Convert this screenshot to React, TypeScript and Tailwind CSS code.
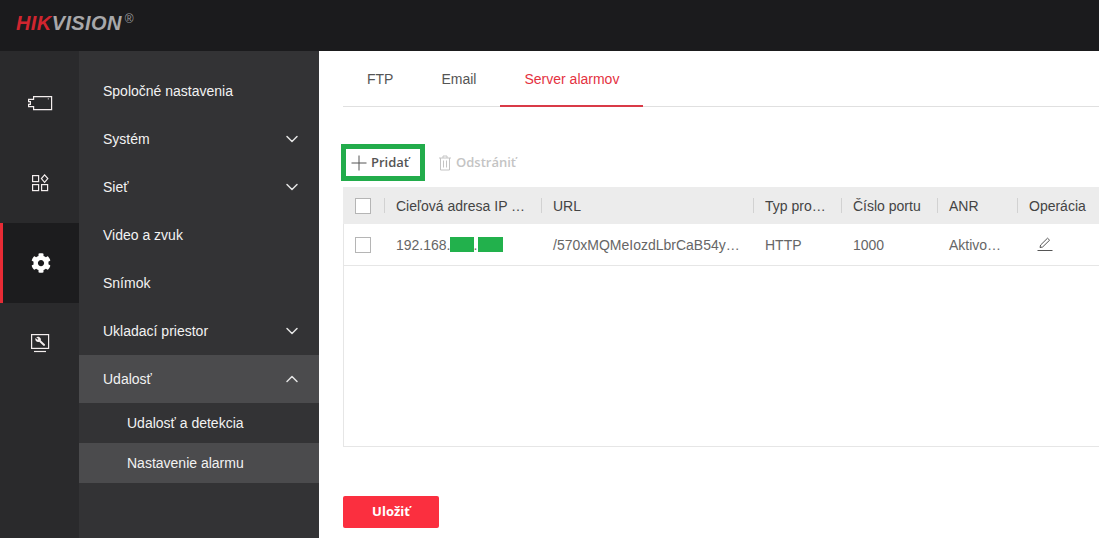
import { ChevronDown, ChevronUp } from "lucide-react";
import { FaCog } from "react-icons/fa";

const menu = [
  { name: "Spoločné nastavenia" },
  { name: "Systém", arrow: true },
  { name: "Sieť", arrow: true },
  { name: "Video a zvuk" },
  { name: "Snímok" },
  { name: "Ukladací priestor", arrow: true },
];

const CameraIcon = () => (
  <svg width="26" height="16" viewBox="0 0 26 16" fill="none" stroke="#f4eeee" strokeWidth="1.2">
    <path d="M6.6 1.6H24.6V14.6H6.6V11.6H1.6V9.4H3.4V6.6H1.6V4.4H6.6Z" />
    <rect x="20.8" y="3.4" width="1" height="1" fill="#f4eeee" stroke="none" />
  </svg>
);

const AppsIcon = () => (
  <svg width="20" height="20" viewBox="0 0 20 20" fill="none" stroke="#f4eeee" strokeWidth="1.2">
    <rect x="2.6" y="2.6" width="6" height="6" />
    <rect x="2.6" y="11.6" width="6" height="6" />
    <rect x="11.6" y="11.6" width="6" height="6" />
    <path d="M14.6 1.9L17.8 5.6L14.6 9.3L11.4 5.6Z" />
  </svg>
);

const MaintenanceIcon = () => (
  <svg width="20" height="20" viewBox="0 0 20 20" fill="none">
    <rect x="1.6" y="1.6" width="17" height="13.8" stroke="#f4eeee" strokeWidth="1.2" />
    <path d="M4 18.5H16" stroke="#f4eeee" strokeWidth="1.2" />
    <path
      d="M6.2 4.2C7.6 3.2 9.8 3.6 10.6 5.2C11 6 11 6.8 10.8 7.4L14.8 11.2C15.4 11.8 14.8 13 14 13C13.6 13 13.4 12.8 13.2 12.6L9.2 8.8C8.2 9.2 6.8 9 6 8C5.2 7 5.2 5.8 5.6 5L7.4 6.8L8.4 6L6.2 4.2Z"
      fill="#f4eeee"
    />
  </svg>
);

const PlusIcon = () => (
  <svg width="16" height="16" viewBox="0 0 16 16" stroke="#555" strokeWidth="1">
    <path d="M8 0.5V15.5M0.5 8H15.5" />
  </svg>
);

const TrashIcon = () => (
  <svg width="14" height="16" viewBox="0 0 14 16" fill="none" stroke="#c4c4c4" strokeWidth="1">
    <path d="M1 3H13M5 3V1H9V3M2.5 3V15H11.5V3M5.5 5.5V12.5M8.5 5.5V12.5" />
  </svg>
);

const PencilIcon = () => (
  <svg width="16" height="15" viewBox="0 0 16 15" fill="none" stroke="#555" strokeWidth="1">
    <path d="M3 10.5L3.6 8L10.5 1.2L12.6 3.2L5.6 10Z" />
    <path d="M0.5 13.5H15.5" />
  </svg>
);

const Checkbox = () => <span className="block w-4 h-4 border border-[#b5b5b5] bg-white" />;

const RailItem = ({ active, children }: { active?: boolean; children: React.ReactNode }) => (
  <div
    className={
      active
        ? "h-20 flex items-center justify-center bg-[#1c1c1e] border-l-[3px] border-[#e72b35]"
        : "h-20 flex items-center justify-center"
    }
  >
    {children}
  </div>
);

const HeadCell = ({ children, className }: { children: React.ReactNode; className: string }) => (
  <div className={`${className} relative flex items-center pl-3 pt-[2px] whitespace-nowrap overflow-hidden`}>
    <span className="absolute left-0 top-[11px] h-[15px] w-px bg-[#d2d2d2]" />
    {children}
  </div>
);

export default function App() {
  return (
    <div className="w-[1099px] h-[538px] overflow-hidden flex flex-col bg-white text-[14px] font-['Liberation_Sans',Arial,sans-serif]">
      <header className="h-[51px] shrink-0 bg-[#1b1b1d] flex items-center pl-4">
        <div className="flex items-start italic font-bold text-[20px] leading-none tracking-[0.4px] -mt-[5px]">
          <span className="text-[#d0252f]">HIK</span>
          <span className="text-[#a8a8aa]">VISION</span>
          <span className="not-italic font-normal text-[12px] text-[#9a9a9c] ml-[3px]">®</span>
        </div>
      </header>

      <div className="flex flex-1 min-h-0">
        <aside className="w-[79px] shrink-0 bg-[#2a2a2c] pt-3">
          <RailItem>
            <CameraIcon />
          </RailItem>
          <RailItem>
            <AppsIcon />
          </RailItem>
          <RailItem active>
            <FaCog className="text-white text-[20px]" />
          </RailItem>
          <RailItem>
            <MaintenanceIcon />
          </RailItem>
        </aside>

        <nav className="w-[240px] shrink-0 bg-[#333335] pt-4 text-[#f2f2f2]">
          {menu.map((item) => (
            <div key={item.name} className="h-12 flex items-center justify-between pl-6 pr-[17px]">
              <span>{item.name}</span>
              {item.arrow && <ChevronDown size={20} strokeWidth={1.8} className="text-[#e4e4e4]" />}
            </div>
          ))}
          <div className="h-12 flex items-center justify-between pl-6 pr-[17px] bg-[#4b4b4d]">
            <span>Udalosť</span>
            <ChevronUp size={20} strokeWidth={1.8} className="text-[#e4e4e4]" />
          </div>
          <div className="h-10 flex items-center pl-12">Udalosť a detekcia</div>
          <div className="h-10 flex items-center pl-12 bg-[#4b4b4d]">Nastavenie alarmu</div>
        </nav>

        <main className="flex-1 min-w-0 pl-6 text-[#555]">
          <div className="flex h-[56px] border-b border-[#e0e0e0]">
            <div className="px-6 pt-5 leading-4">FTP</div>
            <div className="px-6 pt-5 leading-4">Email</div>
            <div className="px-6 pt-5 leading-4 text-[#e4323f] h-[56px] border-b-2 border-[#d93a47]">Server alarmov</div>
          </div>

          <div className="flex items-center h-[37px] mt-[37px] -ml-[2px]">
            <div className="w-[84px] h-[37px] flex items-center gap-[4px] pl-[5px] border-[5px] border-[#22ac4b] text-[#555] font-['Open_Sans',sans-serif] font-semibold text-[13px]">
              <PlusIcon />
              <span>Pridať</span>
            </div>
            <div className="flex items-center gap-[4px] ml-[13px] text-[#c4c4c4] font-['Open_Sans',sans-serif] font-semibold text-[13px]">
              <TrashIcon />
              <span>Odstrániť</span>
            </div>
          </div>

          <div className="mt-[6px] h-[260px] w-[800px] border-l border-b border-[#e6e6e6]">
            <div className="h-[37px] flex bg-[#ececec] text-[#444] -ml-px">
              <div className="w-[41px] flex items-center pl-3">
                <Checkbox />
              </div>
              <HeadCell className="w-[157px]">Cieľová adresa IP …</HeadCell>
              <HeadCell className="w-[212px]">URL</HeadCell>
              <HeadCell className="w-[88px]">Typ pro…</HeadCell>
              <HeadCell className="w-[96px]">Číslo portu</HeadCell>
              <HeadCell className="w-[80px]">ANR</HeadCell>
              <HeadCell className="w-[100px]">Operácia</HeadCell>
            </div>
            <div className="h-[42px] flex items-center border-b border-[#e6e6e6] text-[#666]">
              <div className="w-[40px] pl-[11px]">
                <Checkbox />
              </div>
              <div className="w-[157px] pl-3 pt-[2px] flex items-center whitespace-nowrap">
                192.168.
                <span className="inline-block w-[24px] h-[15px] -ml-px -mt-[2px] bg-[#22b14c]" />
                .
                <span className="inline-block w-[25px] h-[15px] ml-px -mt-[2px] bg-[#22b14c]" />
              </div>
              <div className="w-[212px] pl-3 pt-[2px] whitespace-nowrap">/570xMQMeIozdLbrCaB54y…</div>
              <div className="w-[88px] pl-3 pt-[2px]">HTTP</div>
              <div className="w-[96px] pl-3 pt-[2px]">1000</div>
              <div className="w-[80px] pl-3 pt-[2px]">Aktivo…</div>
              <div className="w-[100px] pl-5">
                <PencilIcon />
              </div>
            </div>
          </div>

          <button className="block mt-[49px] w-24 h-8 rounded-[2px] bg-[#fb2f3f] text-white font-['Open_Sans',sans-serif] font-bold text-[13px]">
            Uložiť
          </button>
        </main>
      </div>
    </div>
  );
}
